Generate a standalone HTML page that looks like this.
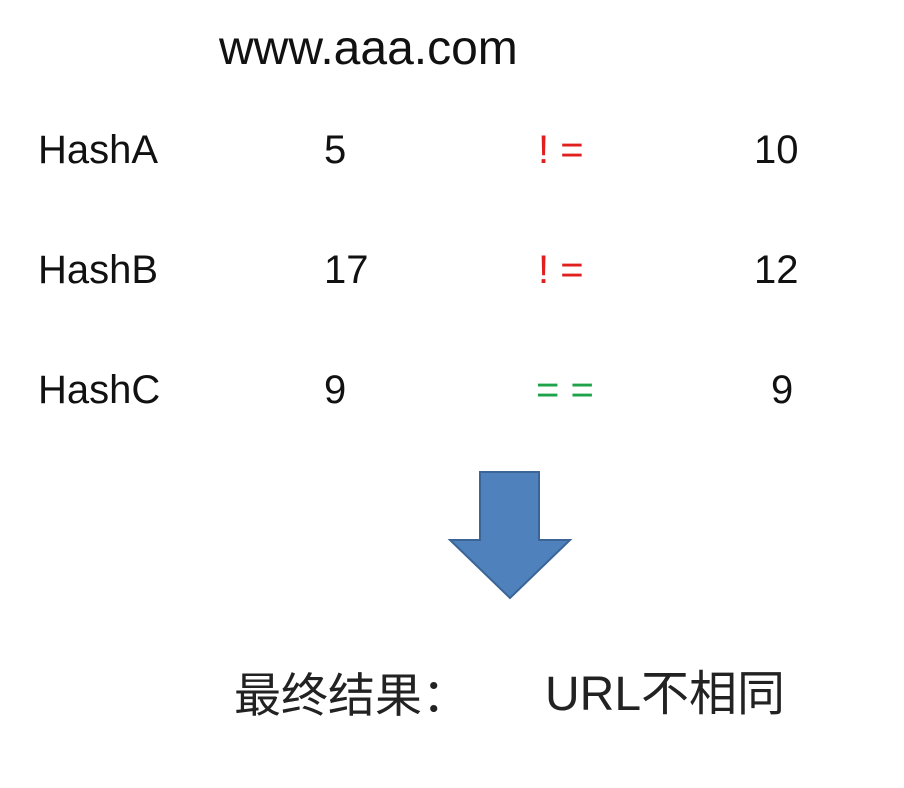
<!DOCTYPE html>
<html><head><meta charset="utf-8"><style>
body{margin:0;width:904px;height:788px;background:#fff;position:relative;overflow:hidden;font-family:"Liberation Sans","Noto Sans CJK SC",sans-serif;color:#111}
.t{position:absolute;line-height:1;white-space:nowrap;font-size:40px}
.r{color:#e0201c}.g{color:#1fa34a}
</style></head><body>
<div class="t" style="left:219px;top:25px;font-size:48px">www.aaa.com</div>
<div class="t" style="left:38px;top:130px">HashA</div>
<div class="t" style="left:324px;top:130px">5</div>
<div class="t r" style="left:538px;top:130px">! =</div>
<div class="t" style="left:754px;top:130px">10</div>
<div class="t" style="left:38px;top:250px">HashB</div>
<div class="t" style="left:324px;top:250px">17</div>
<div class="t r" style="left:538px;top:250px">! =</div>
<div class="t" style="left:754px;top:250px">12</div>
<div class="t" style="left:38px;top:370px">HashC</div>
<div class="t" style="left:324px;top:370px">9</div>
<div class="t g" style="left:536px;top:370px">= =</div>
<div class="t" style="left:771px;top:370px">9</div>
<svg style="position:absolute;left:0;top:0" width="904" height="788">
<path d="M480 472 H539 V540 H570 L510 598 L450 540 H480 Z" fill="#4f81bd" stroke="#3a6596" stroke-width="2"/>
</svg>
<div class="t" style="left:234px;top:672px;font-size:47px;color:#222">最终结果：</div>
<div class="t" style="left:545px;top:671px;font-size:48px;color:#222">URL不相同</div>
</body></html>
